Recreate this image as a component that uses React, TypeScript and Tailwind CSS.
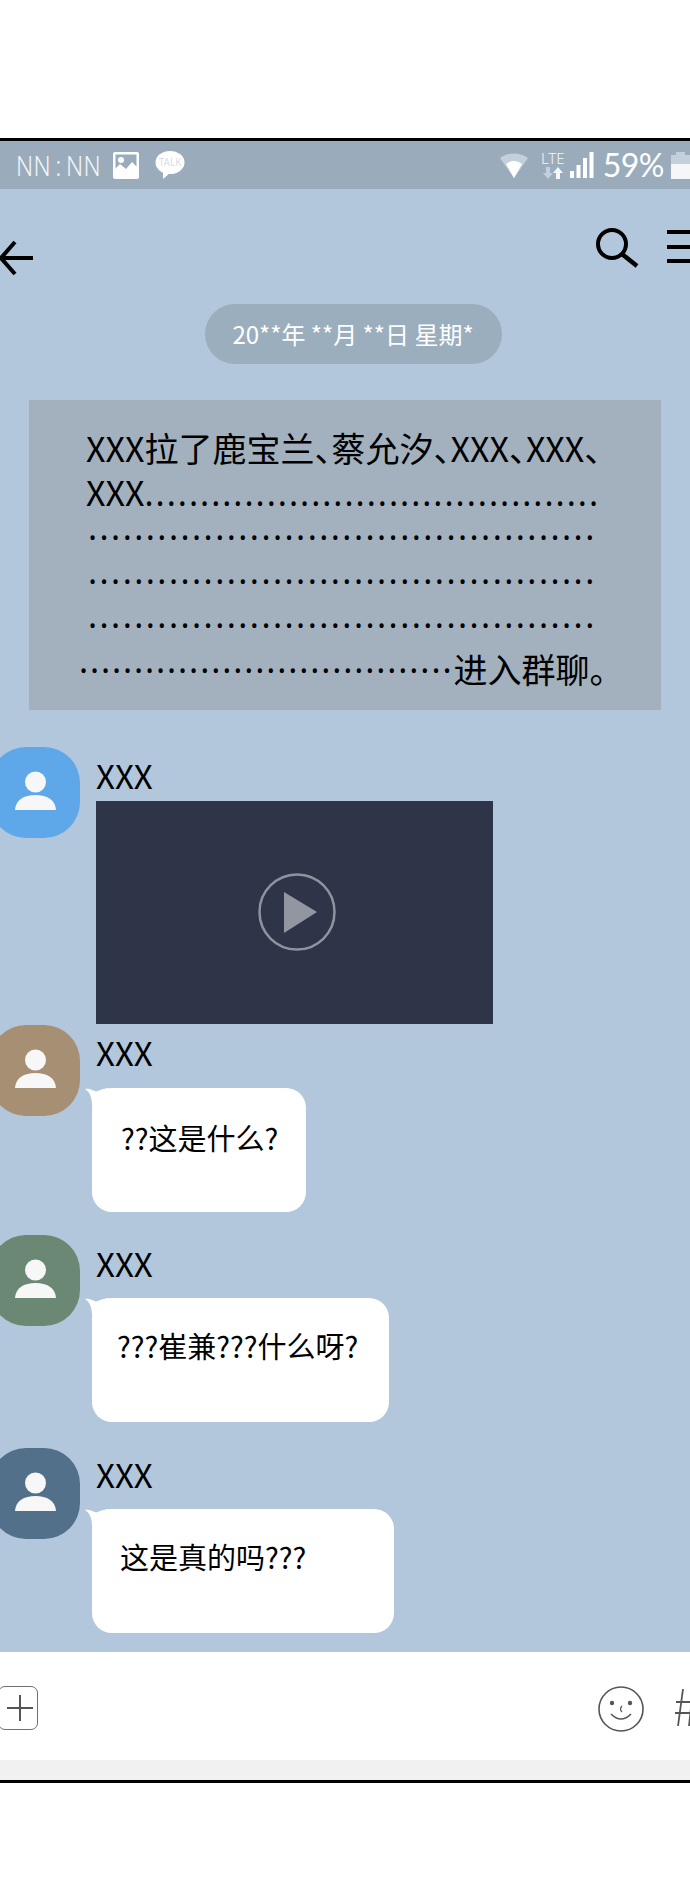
const cjk = "font-['Noto_Sans_CJK_SC','Noto_Sans',sans-serif]";

// squircle avatar with the person glyph, bleeds off the left edge
const Avatar = ({ color }: { color: string }) => (
  <div className={`-ml-[10px] flex h-[91px] w-[90px] shrink-0 items-start justify-center rounded-[36px] ${color}`}>
    <svg width="90" height="91" viewBox="0 0 90 91" className="block">
      <circle cx="45.5" cy="35" r="10.5" fill="#f7f7f7" />
      <path d="M25 63 C25.5 53 34 48 45.5 48 C57 48 65.5 53 66 63 Z" fill="#f7f7f7" />
    </svg>
  </div>
);

const Tail = () => (
  <svg width="24" height="18" viewBox="0 0 24 18" className="absolute -left-[7px] -top-[1px]">
    <path d="M0 2 C4 1 8 3.5 11 4.5 C14 4 17 1.5 24 1 L24 18 L7 18 C7 11 5 5 0 2 Z" fill="#fff" />
  </svg>
);

const Bubble = ({ text, className }: { text: string; className: string }) => (
  <div className={`relative -ml-[4px] h-[124px] rounded-[20px] bg-white text-[29px] leading-[40px] text-black ${className}`}>
    <Tail />
    {text}
  </div>
);

const Name = () => <div className="text-[33px] leading-[36px] text-black">XXX</div>;

const StatusBar = () => (
  <div className="flex h-[48px] items-center bg-[#9aacbb] pl-[16px] text-white">
    <span className="inline-block w-[97px] origin-left scale-x-[0.84] whitespace-nowrap font-['Noto_Sans',sans-serif] text-[28px] font-light leading-none tracking-[0.5px] text-[#f4f6f8]">NN{"\u2009"}:{"\u2009"}NN</span>
    <svg width="26" height="27" viewBox="0 0 26 27">
      <rect x="0" y="0" width="26" height="27" rx="2" fill="#fff" />
      <rect x="2.5" y="2.5" width="21" height="22" fill="#9aacbb" />
      <circle cx="8" cy="8" r="3" fill="#fff" />
      <path d="M2 25 L2 17 L7 12 L13 17 L19 10 L24 15 L24 25 Z" fill="#fff" />
    </svg>
    <svg width="30" height="28" viewBox="0 0 30 28" className="ml-[16px]">
      <ellipse cx="15" cy="11.5" rx="14.5" ry="11.5" fill="#fff" />
      <path d="M8 20 L8 28 L16 21 Z" fill="#fff" />
      <text x="15" y="15" textAnchor="middle" fontSize="10" fill="#d8dfe5" fontFamily="Noto Sans, sans-serif">TALK</text>
    </svg>
    <div className="-mr-[1px] ml-auto flex items-center">
      <svg width="28" height="25" viewBox="0 0 28 25">
        <path d="M0 5 C8 -1 20 -1 28 5 L14 25 Z" fill="#c3d0da" />
        <path d="M6 11 C11 7 17 7 22 11 L14 25 Z" fill="#fff" />
      </svg>
      <div className="ml-[12px] flex w-[26px] flex-col items-center">
        <span className="font-['Noto_Sans',sans-serif] text-[15px] font-light leading-[13px] text-[#f4f6f8]">LTE</span>
        <svg width="20" height="12" viewBox="0 0 20 12" className="mt-[2px]">
          <path d="M5 12 L0 6 L3 6 L3 0 L7 0 L7 6 L10 6 Z" fill="#c3d0da" />
          <path d="M15 0 L20 6 L17 6 L17 12 L13 12 L13 6 L10 6 Z" fill="#f4f6f8" />
        </svg>
      </div>
      <svg width="24" height="26" viewBox="0 0 24 26" className="ml-[4px]">
        <rect x="0" y="19" width="4" height="7" fill="#fff" />
        <rect x="6.5" y="13" width="4" height="13" fill="#fff" />
        <rect x="13" y="6" width="4" height="20" fill="#fff" />
        <rect x="19.5" y="0" width="4" height="26" fill="#fff" />
      </svg>
      <span className="ml-[9px] font-['Lato',sans-serif] text-[32px] leading-none tracking-[-0.5px] text-white">59%</span>
      <svg width="20" height="27" viewBox="0 0 20 27" className="ml-[7px]">
        <path d="M0 3 L5 3 L5 0 L14 0 L14 3 L19 3 L19 12 L0 12 Z" fill="#c3d0da" />
        <rect x="0" y="12" width="19" height="15" fill="#f4f6f8" />
      </svg>
    </div>
  </div>
);

const Header = () => (
  <div className="flex h-[115px] items-start justify-between">
    <svg width="34" height="36" viewBox="0 0 34 36" className="mt-[51px]">
      <path d="M33 18 L1 18 M15 2 L1 18 L15 34" fill="none" stroke="#000" strokeWidth="4" />
    </svg>
    <div className="mt-[39px] flex items-start">
      <svg width="44" height="40" viewBox="0 0 44 40">
        <circle cx="16" cy="16" r="14" fill="none" stroke="#000" strokeWidth="4" />
        <path d="M26 26 L41 38" fill="none" stroke="#000" strokeWidth="4.5" />
      </svg>
      <div className="ml-[27px] mt-[2px] flex w-[23px] flex-col gap-[10.5px]">
        <div className="h-[4px] bg-black" />
        <div className="h-[4px] bg-black" />
        <div className="h-[4px] bg-black" />
      </div>
    </div>
  </div>
);

// the dots are latin glyphs, the CJK face would set them full width
const Notice = () => (
  <div className="mx-[29px] mt-[36px] h-[310px] bg-[#a3b1bf] pl-[57px] pt-[26px] text-[34px] leading-[44px] text-black [font-feature-settings:'halt']">
    <div className="whitespace-nowrap">XXX拉了鹿宝兰、蔡允汐、XXX、XXX、</div>
    <div className="whitespace-nowrap">XXX<span className="font-['Noto_Sans',sans-serif] tracking-[2px]">{".".repeat(41)}</span></div>
    <div className="ml-[2px] whitespace-nowrap font-['Noto_Sans',sans-serif] tracking-[2.45px]">{"·".repeat(44)}</div>
    <div className="ml-[2px] whitespace-nowrap font-['Noto_Sans',sans-serif] tracking-[2.45px]">{"·".repeat(44)}</div>
    <div className="ml-[2px] whitespace-nowrap font-['Noto_Sans',sans-serif] tracking-[2.45px]">{"·".repeat(44)}</div>
    <div className="-ml-[7px] whitespace-nowrap">
      <span className="font-['Noto_Sans',sans-serif] tracking-[1.9px]">{"·".repeat(34)}</span>进入群聊。
    </div>
  </div>
);

const VideoCard = () => (
  <div className="mt-[8px] flex h-[223px] w-[397px] items-center justify-center bg-[#2e3548]">
    <svg width="80" height="80" viewBox="0 0 80 80" className="ml-[4px] mt-[-1px]">
      <circle cx="40" cy="40" r="37.5" fill="none" stroke="#8f93a0" strokeWidth="2.5" />
      <path d="M27 20 L60 40 L27 61 Z" fill="#9296a1" />
    </svg>
  </div>
);

const InputBar = () => (
  <div className="flex h-[108px] items-start justify-between bg-white">
    <div className="mt-[34px] -ml-[2px] flex h-[44px] w-[40px] items-center justify-center rounded-[7px] border-[1.5px] border-[#6f6f6f]">
      <svg width="26" height="26" viewBox="0 0 26 26" className="ml-[4px]">
        <path d="M13 0 L13 26 M0 13 L26 13" stroke="#555" strokeWidth="2" />
      </svg>
    </div>
    <div className="-mr-[4px] mt-[34px] flex items-start">
      <svg width="46" height="46" viewBox="0 0 46 46">
        <ellipse cx="23" cy="23" rx="22" ry="22" fill="none" stroke="#555" strokeWidth="1.6" />
        <circle cx="14" cy="17" r="2.2" fill="#555" />
        <circle cx="32" cy="17" r="2.2" fill="#555" />
        <path d="M24 20 Q21 23 24 26" fill="none" stroke="#555" strokeWidth="1.2" />
        <path d="M13 28 Q23 38 33 28" fill="none" stroke="#555" strokeWidth="1.6" />
      </svg>
      <svg width="20" height="40" viewBox="0 0 20 40" className="ml-[30px] mt-[2px]">
        <path d="M9 1 L4 38 M19 1 L15 38 M2 14 L20 14 M1 25 L20 25" fill="none" stroke="#555" strokeWidth="1.8" />
      </svg>
    </div>
  </div>
);

export default function App() {
  return (
    <div className={`h-[1899px] w-[690px] overflow-hidden bg-white ${cjk}`}>
      <div className="h-[138px]" />
      <div className="border-y-[3px] border-black">
        <div className="bg-[#b2c7dc]">
          <StatusBar />
          <Header />
          <div className="flex justify-center">
            <div className="ml-[16px] flex h-[60px] w-[297px] items-center justify-center rounded-[30px] bg-[#9baebd] text-[24px] text-white">
              20**年 **月 **日 星期*
            </div>
          </div>
          <Notice />

          <div className="mt-[37px] flex gap-[16px]">
            <Avatar color="bg-[#5ea7e8]" />
            <div className="mt-[10px]">
              <Name />
              <VideoCard />
            </div>
          </div>

          <div className="mt-[1px] flex gap-[16px]">
            <Avatar color="bg-[#a68f72]" />
            <div className="mt-[9px]">
              <Name />
              <Bubble text="??这是什么?" className="mt-[18px] w-[214px] pl-[29px] pt-[29px]" />
            </div>
          </div>

          <div className="mt-[23px] flex gap-[16px]">
            <Avatar color="bg-[#6a8873]" />
            <div className="mt-[10px]">
              <Name />
              <Bubble text="???崔兼???什么呀?" className="mt-[17px] w-[297px] pl-[25px] pt-[27px]" />
            </div>
          </div>

          <div className="mt-[26px] flex gap-[16px]">
            <Avatar color="bg-[#527089]" />
            <div className="mt-[8px]">
              <Name />
              <Bubble text="这是真的吗???" className="mt-[17px] w-[302px] pl-[28px] pt-[27px]" />
            </div>
          </div>

          <div className="h-[19px]" />
          <InputBar />
          <div className="h-[20px] bg-[#f1f1f1]" />
        </div>
      </div>
    </div>
  );
}
